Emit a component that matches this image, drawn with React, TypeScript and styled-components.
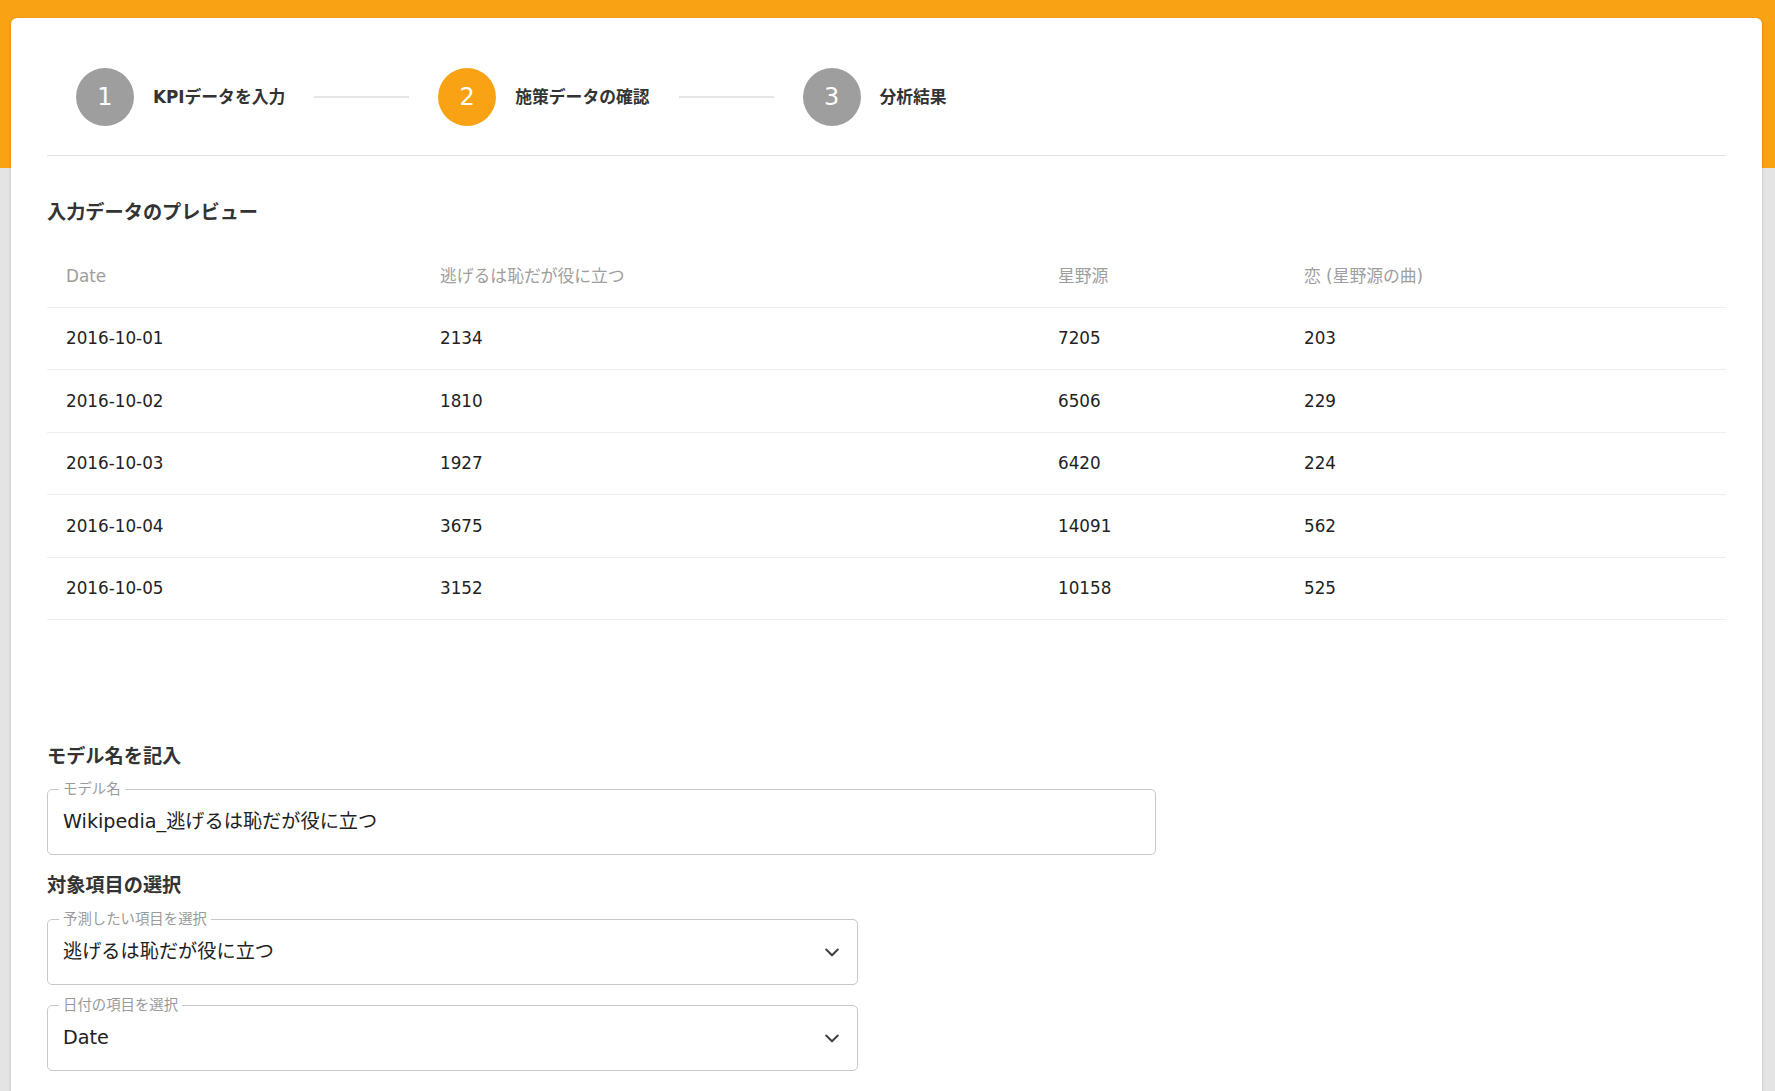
import React from "react";
import styled, { createGlobalStyle } from "styled-components";

const GlobalStyle = createGlobalStyle`
  html, body {
    margin: 0;
    padding: 0;
    overflow: hidden;
  }
  body {
    font-family: "DejaVu Sans", "Noto Sans CJK JP", sans-serif;
    color: #212121;
  }
  * { box-sizing: border-box; }
`;

const ORANGE = "#f9a314";

const Page = styled.div`
  min-height: 100vh;
  background: linear-gradient(to bottom, ${ORANGE} 0, ${ORANGE} 168px, #e4e4e4 168px);
  padding: 18px 13px 0 11px;
`;

const Card = styled.main`
  background: #fff;
  border-radius: 6px 6px 0 0;
  box-shadow: 0 1px 3px rgba(0, 0, 0, 0.22);
  padding: 0 36px 40px;
  min-height: 1100px;
`;

const Stepper = styled.nav`
  display: flex;
  align-items: center;
  padding: 50px 29px 29px;
  border-bottom: 1px solid #e0e0e0;
`;

const Step = styled.div`
  display: flex;
  align-items: center;
  gap: 19px;
`;

const StepCircle = styled.div<{ $active?: boolean }>`
  width: 58px;
  height: 58px;
  border-radius: 50%;
  background: ${(p) => (p.$active ? ORANGE : "#9e9e9e")};
  color: #fff;
  display: flex;
  align-items: center;
  justify-content: center;
  font-family: "DejaVu Sans", sans-serif;
  font-size: 24px;
  line-height: 1;
`;

const StepLabel = styled.span`
  font-size: 16.8px;
  font-weight: 700;
  color: #333;
  line-height: 1;
`;

const Connector = styled.div`
  width: 95px;
  height: 2px;
  background: #e6e6e6;
  margin: 0 29px;
`;

const SectionTitle = styled.h2<{ $gap: number }>`
  margin: ${(p) => p.$gap}px 0 0;
  font-size: 19.2px;
  font-weight: 700;
  line-height: 28px;
  color: #333;
`;

const Table = styled.div`
  margin-top: 18px;
`;

const Row = styled.div`
  display: grid;
  grid-template-columns: 374px 618px 246px 1fr;
  align-items: center;
  height: 62.5px;
  border-bottom: 1px solid #eeeeee;
`;

const Cell = styled.div<{ $head?: boolean }>`
  padding-left: 19px;
  font-size: 16.8px;
  line-height: 24px;
  color: ${(p) => (p.$head ? "#9e9e9e" : "#222222")};
  white-space: nowrap;
`;

const Field = styled.fieldset<{ $width: number; $gap: number }>`
  width: ${(p) => p.$width}px;
  margin: ${(p) => p.$gap}px 0 0;
  padding: 0;
  border: 1px solid #c8c8c8;
  border-radius: 5px;
  min-width: 0;
`;

const Legend = styled.legend`
  margin-left: 11px;
  padding: 0 4px;
  font-size: 14.4px;
  line-height: 16px;
  color: #9a9a9a;
`;

const FieldBody = styled.div`
  display: flex;
  align-items: center;
  justify-content: space-between;
  height: 50px;
  padding: 0 18px 0 15px;
  margin-bottom: 7px;
`;

const FieldValue = styled.span`
  font-size: 19.2px;
  line-height: 1;
  color: #212121;
  white-space: nowrap;
`;

const Chevron = () => (
  <svg width="14" height="9" viewBox="0 0 14 9" aria-hidden="true">
    <polyline points="1.2,1.5 7,7.2 12.8,1.5" fill="none" stroke="#3c3c3c" strokeWidth="1.9" strokeLinecap="round" strokeLinejoin="round" />
  </svg>
);

const headers = ["Date", "逃げるは恥だが役に立つ", "星野源", "恋 (星野源の曲)"];
const rows = [
  ["2016-10-01", "2134", "7205", "203"],
  ["2016-10-02", "1810", "6506", "229"],
  ["2016-10-03", "1927", "6420", "224"],
  ["2016-10-04", "3675", "14091", "562"],
  ["2016-10-05", "3152", "10158", "525"],
];

const steps = [
  { n: 1, label: "KPIデータを入力" },
  { n: 2, label: "施策データの確認", active: true },
  { n: 3, label: "分析結果" },
];

export default function App() {
  return (
    <>
      <GlobalStyle />
      <Page>
        <Card>
          <Stepper>
            {steps.map((s, i) => (
              <React.Fragment key={s.n}>
                {i > 0 && <Connector />}
                <Step>
                  <StepCircle $active={s.active}>{s.n}</StepCircle>
                  <StepLabel>{s.label}</StepLabel>
                </Step>
              </React.Fragment>
            ))}
          </Stepper>

          <SectionTitle $gap={43}>入力データのプレビュー</SectionTitle>
          <Table>
            <Row>
              {headers.map((h) => (
                <Cell $head key={h}>{h}</Cell>
              ))}
            </Row>
            {rows.map((r) => (
              <Row key={r[0]}>
                {r.map((c, i) => (
                  <Cell key={i}>{c}</Cell>
                ))}
              </Row>
            ))}
          </Table>

          <SectionTitle $gap={123}>モデル名を記入</SectionTitle>
          <Field $width={1109} $gap={10}>
            <Legend>モデル名</Legend>
            <FieldBody>
              <FieldValue>Wikipedia_逃げるは恥だが役に立つ</FieldValue>
            </FieldBody>
          </Field>

          <SectionTitle $gap={17}>対象項目の選択</SectionTitle>
          <Field $width={811} $gap={11}>
            <Legend>予測したい項目を選択</Legend>
            <FieldBody>
              <FieldValue>逃げるは恥だが役に立つ</FieldValue>
              <Chevron />
            </FieldBody>
          </Field>
          <Field $width={811} $gap={12}>
            <Legend>日付の項目を選択</Legend>
            <FieldBody>
              <FieldValue>Date</FieldValue>
              <Chevron />
            </FieldBody>
          </Field>
        </Card>
      </Page>
    </>
  );
}
